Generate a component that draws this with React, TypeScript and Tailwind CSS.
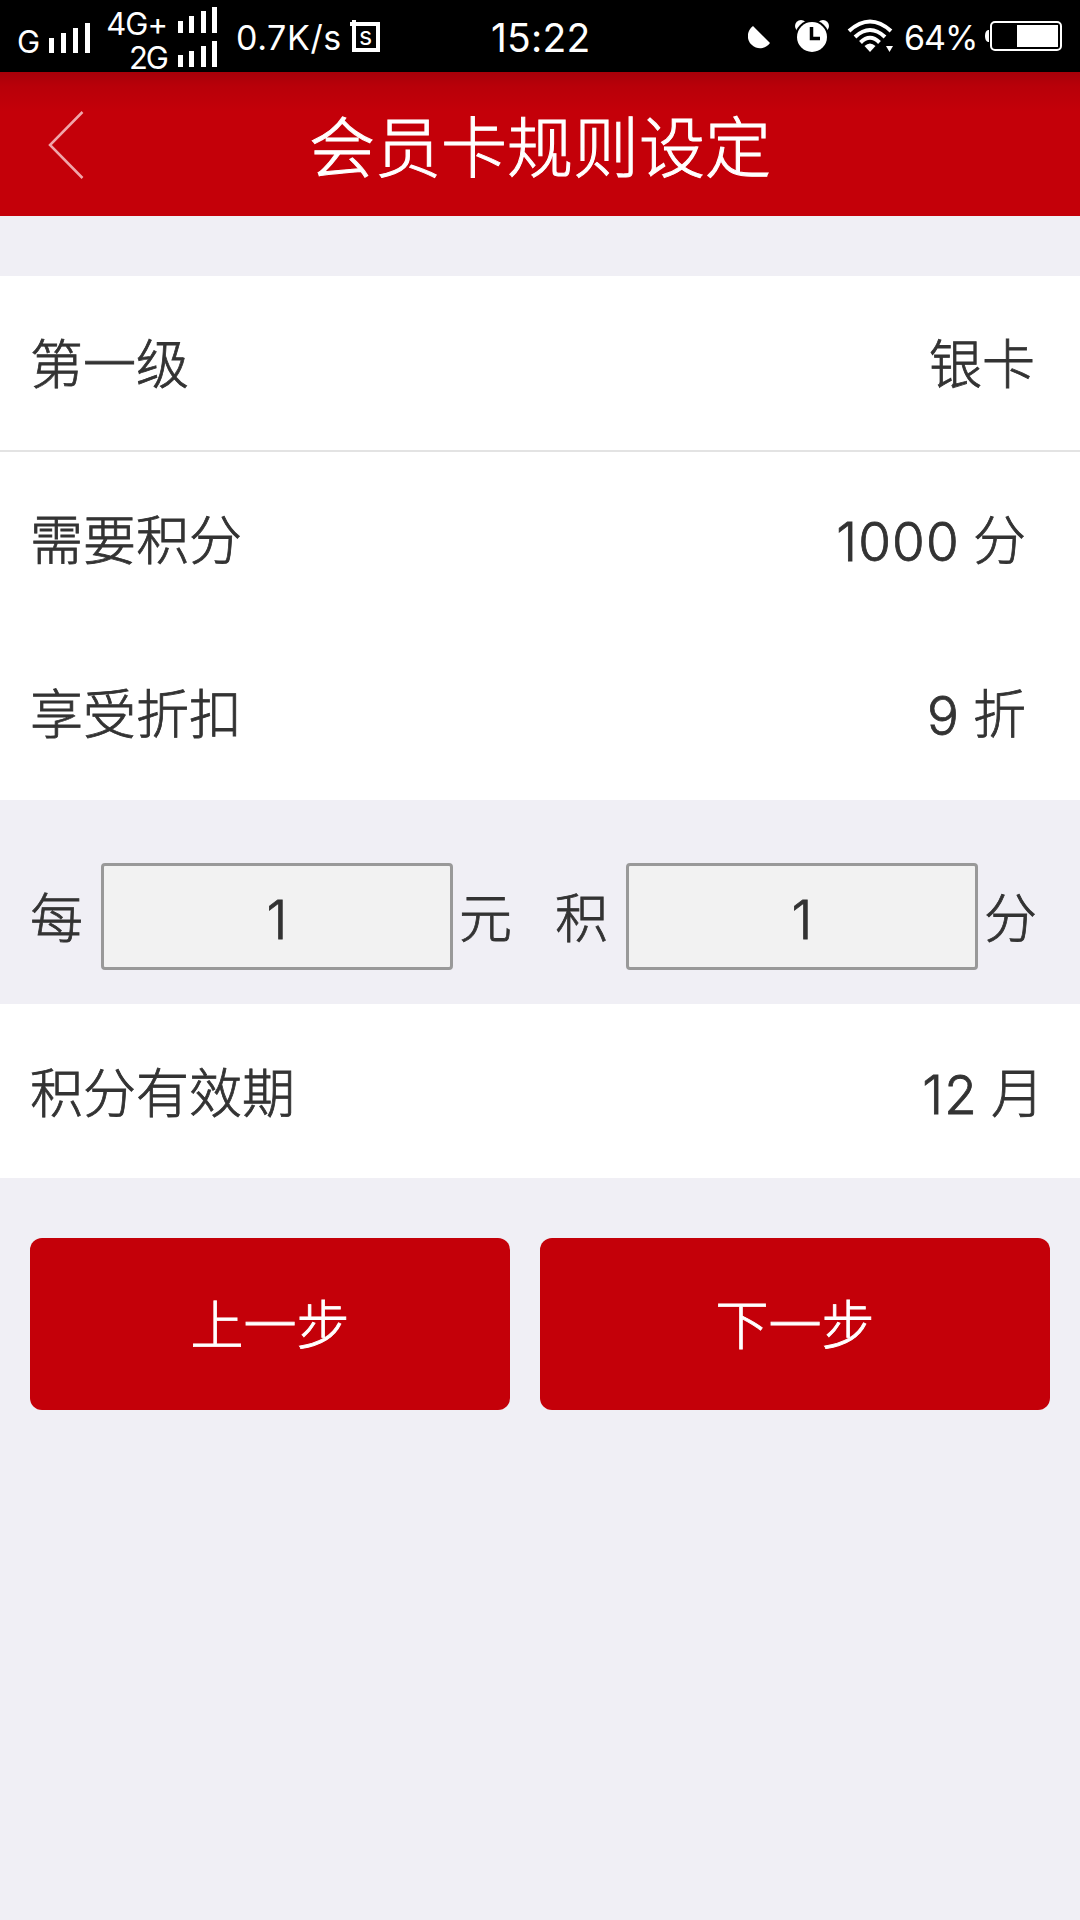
import React from "react";

type BarsProps = { tops: number[]; xs: number[]; bottom: number };

function Bars({ tops, xs, bottom }: BarsProps) {
  return (
    <>
      {tops.map((top, i) => (
        <rect key={i} x={xs[i]} y={top} width={5} height={bottom - top} />
      ))}
    </>
  );
}

function StatusBar() {
  return (
    <div className="flex h-[72px] items-start bg-black text-white">
      <span className="ml-[17px] mt-[26px] w-[31px] text-[31px] leading-[32px] tracking-[-2px]">G</span>
      <svg width="43" height="72" viewBox="-1 0 43 72" fill="#fff">
        <Bars xs={[0, 12, 24, 36]} tops={[38, 33, 28, 23]} bottom={53} />
      </svg>
      <div className="ml-[16px] mt-[7px] flex w-[60px] flex-col items-end whitespace-nowrap text-[31px] leading-[34px]">
        <span className="tracking-[-1px]">4G+</span>
        <span className="tracking-[-2px]">2G</span>
      </div>
      <svg className="ml-[11px]" width="41" height="72" viewBox="0 0 41 72" fill="#fff">
        <Bars xs={[0, 11, 23, 34]} tops={[21, 16, 11, 7]} bottom={33} />
        <Bars xs={[0, 11, 23, 34]} tops={[55, 51, 46, 41]} bottom={67} />
      </svg>
      <span className="ml-[17px] mt-[20px] w-[114px] whitespace-nowrap text-[34px] leading-[36px] tracking-[0.6px]">0.7K/s</span>
      <div className="relative h-[72px] w-[32px]">
        <svg width="32" height="72" viewBox="0 0 32 72" fill="none" stroke="#fff" strokeWidth="4">
          <path d="M4 20V50H28V24H0" />
        </svg>
        <span className="absolute left-[9px] top-[22px] text-[25px] leading-[28px]">s</span>
      </div>
      <span className="ml-[109px] mt-[18px] w-[257px] whitespace-nowrap text-[39px] leading-[40px] tracking-[0.2px]">15:22</span>
      <svg width="150" height="72" viewBox="748 0 150 72" fill="#fff">
        <path d="M753 26L770 43A12.2 12.2 0 1 1 753 26Z" />
        <circle cx="801" cy="26" r="6" />
        <circle cx="823" cy="26" r="6" />
        <circle cx="812" cy="37" r="17" fill="#000" />
        <circle cx="812" cy="37" r="15" />
        <path d="M811.5 27V38.5H820" fill="none" stroke="#000" strokeWidth="3.5" />
        <g fill="none" stroke="#fff" strokeWidth="4">
          <path d="M849 31Q870 12 891 31" />
          <path d="M855 37Q870 23 885 37" />
          <path d="M860.5 42.5Q870 33 879.500 42.500" />
        </g>
        <path d="M864.500 46Q870 41 875.500 46L870 52Z" />
        <path d="M886 46H893L889.500 52Z" />
      </svg>
      <span className="ml-[6px] mt-[20px] w-[81px] whitespace-nowrap text-[34px] leading-[36px] tracking-[-1px]">64%</span>
      <svg width="78" height="72" viewBox="985 0 78 72">
        <path d="M989 30H988Q985 31 985 36Q985 41 988 42H989Z" fill="#fff" />
        <rect x="991" y="22" width="70" height="28" rx="4" fill="none" stroke="#fff" strokeWidth="2" />
        <rect x="1017" y="25" width="41" height="22" fill="#fff" />
      </svg>
    </div>
  );
}

function Header() {
  return (
    <header className="grid h-[144px] grid-cols-[150px_1fr_150px] items-center bg-[#c40009] bg-[linear-gradient(to_bottom,#a80009_0px,#b80009_14px,#c40009_40px)] text-white">
      <svg className="ml-[47px]" width="38" height="72" viewBox="0 0 38 72" fill="none" stroke="#f0a6aa" strokeWidth="2.5">
        <path d="M35.500 4L3 37L35.500 70" />
      </svg>
      <h1 className="pt-[7px] text-center text-[66px] font-light leading-[80px] [-webkit-text-stroke:1px_#fff]">会员卡规则设定</h1>
    </header>
  );
}

type RowProps = { label: string; value: string; unit?: string; className: string };

function Row({ label, value, unit, className }: RowProps) {
  return (
    <div className={`flex items-center justify-between bg-white pl-[30px] ${className}`}>
      <span className="pt-[3px]">{label}</span>
      <span className="flex items-center pt-[3px]">
        {unit ? (
          <>
            <span className="mr-[13px] pt-[2px] tracking-[1.2px]">{value}</span>
            <span>{unit}</span>
          </>
        ) : (
          value
        )}
      </span>
    </div>
  );
}

function NumberBox() {
  return (
    <div className="flex h-[107px] w-[352px] items-center justify-center rounded-[4px] border-3 border-[#999] bg-[#f2f2f2] pt-[6px]">
      1
    </div>
  );
}

export default function App() {
  return (
    <div className="flex h-[1920px] w-[1080px] flex-col overflow-hidden bg-[#f0eff5] font-['Inter','Noto_Sans_CJK_SC',sans-serif] text-[53px] leading-[76px] text-[#333]">
      <StatusBar />
      <Header />
      <main className="font-light [-webkit-text-stroke:0.8px_currentColor]">
        <section className="mt-[60px]">
          <Row label="第一级" value="银卡" className="h-[176px] border-b-2 border-[#e3e3e3] pr-[45px]" />
          <Row label="需要积分" value="1000" unit="分" className="h-[174px] pr-[54px]" />
          <Row label="享受折扣" value="9" unit="折" className="h-[174px] pr-[54px]" />
        </section>
        <section className="flex h-[204px] items-center pl-[30px] pt-[29px]">
          <span className="w-[71px] pt-[5px]">每</span>
          <NumberBox />
          <span className="w-[102px] pl-[6px] pt-[5px]">元</span>
          <span className="w-[71px] pt-[5px]">积</span>
          <NumberBox />
          <span className="pl-[6px] pt-[5px]">分</span>
        </section>
        <Row label="积分有效期" value="12" unit="月" className="h-[174px] pr-[36px] pt-[2px]" />
        <section className="flex gap-[30px] px-[30px] pt-[60px] text-white">
          <button className="h-[172px] w-[480px] rounded-[12px] bg-[#c40009] pt-[4px] [-webkit-text-stroke:0.8px_#fff]">上一步</button>
          <button className="h-[172px] w-[510px] rounded-[12px] bg-[#c40009] pt-[4px] [-webkit-text-stroke:0.8px_#fff]">下一步</button>
        </section>
      </main>
    </div>
  );
}
